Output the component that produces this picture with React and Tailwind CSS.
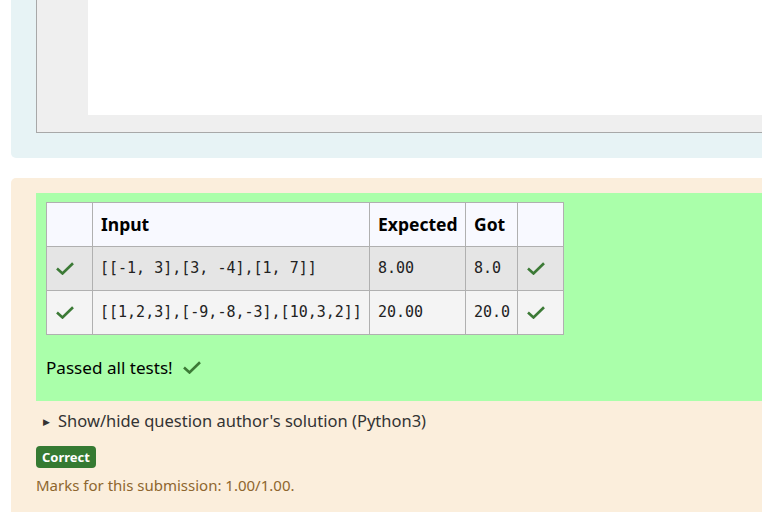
const Check = ({className = ""}) => (
    <svg width="18" height="13" viewBox="0 0 18 13" className={className}>
        <path d="M1 6.5 L6.5 11.5 L17 1.2" fill="none" stroke="#3c7a36" strokeWidth="2.6"/>
    </svg>
);

const rows = [
    {input: "[[-1, 3],[3, -4],[1, 7]]", expected: "8.00", got: "8.0", bg: "bg-[#e5e5e5]"},
    {input: "[[1,2,3],[-9,-8,-3],[10,3,2]]", expected: "20.00", got: "20.0", bg: "bg-[#f4f4f4]"},
];

export default function App() {
    return (
        <div className="w-[762px] h-[512px] overflow-hidden bg-white font-['Segoe_UI','Noto_Sans',sans-serif] text-[#1d2125]">
            {/* editor panel */}
            <div className="ml-[11px] w-[900px] h-[158px] bg-[#e7f3f5] rounded-bl-[5px] pl-[25px]">
                <div className="h-[133px] bg-[#efefef] border-l border-b border-[#a8a8a8] pl-[51px]">
                    <div className="h-[115px] bg-white"></div>
                </div>
            </div>

            {/* result panel */}
            <div className="ml-[11px] mt-[20px] w-[900px] h-[340px] bg-[#fbeedc] rounded-tl-[5px] pt-[15px] pl-[25px]">
                <div className="h-[208px] bg-[#aaffaa] pt-[9px] pl-[10px]">
                    <table className="border-collapse table-fixed text-left w-[518px]">
                        <colgroup>
                            <col className="w-[46px]"/>
                            <col className="w-[277px]"/>
                            <col className="w-[96px]"/>
                            <col className="w-[52px]"/>
                            <col className="w-[46px]"/>
                        </colgroup>
                        <thead>
                        <tr className="bg-[#f8f9ff] h-[44px]">
                            <th className="border border-[#b0b0b0]"></th>
                            <th className="border border-[#b0b0b0] px-2 text-[17.5px] font-bold text-black">Input</th>
                            <th className="border border-[#b0b0b0] px-2 text-[17.5px] font-bold text-black">Expected</th>
                            <th className="border border-[#b0b0b0] px-2 text-[17.5px] font-bold text-black">Got</th>
                            <th className="border border-[#b0b0b0]"></th>
                        </tr>
                        </thead>
                        <tbody className="font-['DejaVu_Sans_Mono',monospace] text-[15px] text-[#222]">
                        {rows.map(r => (
                            <tr key={r.input} className={r.bg + " h-[44px]"}>
                                <td className="border border-[#b0b0b0] pl-[9px]">
                                    <div className="flex"><Check/></div>
                                </td>
                                <td className="border border-[#b0b0b0] px-[7px] whitespace-pre">{r.input}</td>
                                <td className="border border-[#b0b0b0] px-2">{r.expected}</td>
                                <td className="border border-[#b0b0b0] pl-2 pr-0 whitespace-pre">{r.got}</td>
                                <td className="border border-[#b0b0b0] pl-[9px]">
                                    <div className="flex"><Check/></div>
                                </td>
                            </tr>
                        ))}
                        </tbody>
                    </table>
                    <div className="flex items-center gap-[10px] mt-[20px] text-[17.1px] text-black">
                        <span>Passed all tests!</span>
                        <Check/>
                    </div>
                </div>

                <div className="flex items-center mt-[8px] ml-[7px] text-[16.5px] text-[#333]">
                    <span className="text-[9px] mr-[8px]">▶</span>
                    <span>Show/hide question author's solution (Python3)</span>
                </div>

                <div className="mt-[10px]">
                    <span className="inline-block bg-[#357a32] text-white text-[13px] font-bold rounded-[4px] px-[6px] leading-[22px]">Correct</span>
                </div>
                <div className="mt-[6px] text-[15px] text-[#8e662e]">Marks for this submission: 1.00/1.00.</div>
            </div>
        </div>
    );
}
